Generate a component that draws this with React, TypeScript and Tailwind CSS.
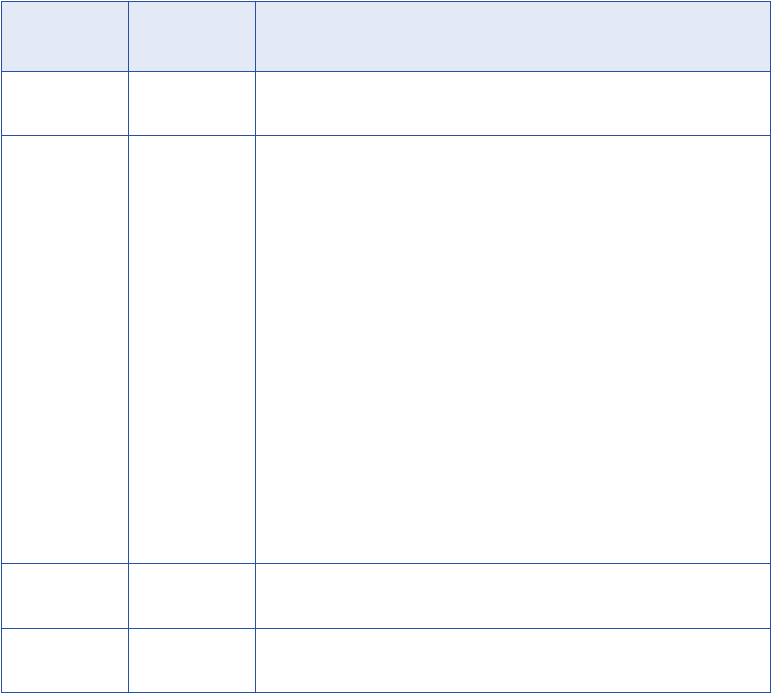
export default function App() {
  const rows = [
    { h: "h-[70px]", header: true },
    { h: "h-[64px]", header: false },
    { h: "h-[428px]", header: false },
    { h: "h-[65px]", header: false },
    { h: "h-[64px]", header: false },
  ];
  return (
    <div className="bg-white w-[771px] h-[693px] pt-px pl-px" style={{ fontFamily: '"Liberation Sans", sans-serif' }}>
      <div className="grid grid-cols-[127px_127px_515px] border-l border-t border-[#2750a3] w-[770px]">
        {rows.map((r, i) => (
          <div key={i} className="contents">
            <div className={`${r.h} border-r border-b border-[#2750a3] ${r.header ? "bg-[#e3e9f5]" : "bg-white"}`} />
            <div className={`${r.h} border-r border-b border-[#2750a3] ${r.header ? "bg-[#e3e9f5]" : "bg-white"}`} />
            <div className={`${r.h} border-r border-b border-[#2750a3] ${r.header ? "bg-[#e3e9f5]" : "bg-white"}`} />
          </div>
        ))}
      </div>
    </div>
  );
}
